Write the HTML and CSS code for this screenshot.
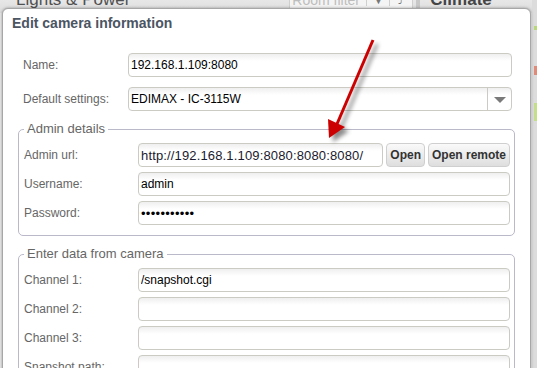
FILE: index.html
```html
<!DOCTYPE html>
<html lang="en">
<head>
  <meta charset="UTF-8">
  <title>Edit camera information</title>
  <link rel="stylesheet" href="styles.css">
</head>
<body>

  <!-- Page behind the dialog -->
  <div class="page">
    <div class="toolbar">
      <h2 class="area-title">Lights &amp; Power</h2>
      <div class="room-filter">
        <span class="filter-text">Room filter</span>
        <span class="filter-btn">&#9660;</span>
        <span class="filter-btn">&#10548;</span>
      </div>
      <span class="sep"></span>
      <h2 class="area-title">Climate</h2>
    </div>
    <div class="side">
      <span class="mark mark-green"></span>
      <span class="mark mark-red"></span>
      <span class="mark mark-lime"></span>
    </div>
  </div>

  <!-- Dialog -->
  <div class="dialog">
    <div class="dialog-title">Edit camera information</div>

    <form class="camera-form">
      <div class="row">
        <label>Name:</label>
        <input type="text" class="field" value="192.168.1.109:8080">
      </div>
      <div class="row">
        <label>Default settings:</label>
        <div class="combo">
          <span class="combo-text">EDIMAX - IC-3115W</span>
          <span class="combo-arrow"></span>
        </div>
      </div>

      <fieldset>
        <legend>Admin details</legend>
        <div class="row">
          <label>Admin url:</label>
          <input type="text" class="field url-field" value="http://192.168.1.109:8080:8080:8080/">
          <button type="button" class="btn">Open</button>
          <button type="button" class="btn">Open remote</button>
        </div>
        <div class="row">
          <label>Username:</label>
          <input type="text" class="field" value="admin">
        </div>
        <div class="row">
          <label>Password:</label>
          <input type="password" class="field pass-field" value="adminadmin1">
        </div>
      </fieldset>

      <fieldset>
        <legend>Enter data from camera</legend>
        <div class="row">
          <label>Channel 1:</label>
          <input type="text" class="field" value="/snapshot.cgi">
        </div>
        <div class="row">
          <label>Channel 2:</label>
          <input type="text" class="field">
        </div>
        <div class="row">
          <label>Channel 3:</label>
          <input type="text" class="field">
        </div>
        <div class="row">
          <label>Snapshot path:</label>
          <input type="text" class="field">
        </div>
      </fieldset>
    </form>
  </div>

  <!-- Red annotation arrow -->
  <svg class="arrow" width="537" height="368" viewBox="0 0 537 368">
    <line x1="373" y1="40" x2="337" y2="124" stroke="#cc0000" stroke-width="3"/>
    <polygon points="329,138 328,119 345,127" fill="#cc0000"/>
  </svg>

</body>
</html>
```

FILE: styles.css
```css
/* Base */
body {
  margin: 0;
  width: 537px;
  height: 368px;
  overflow: hidden;
  background: #e9e9e9;
  font-family: "Liberation Sans", Arial, sans-serif;
  position: relative;
}

/* Page behind the dialog */
.page {
  display: flex;
  height: 368px;
}

.toolbar {
  display: flex;
  align-items: center;
  width: 532px;
  height: 26px;
  margin-top: -13px;
  background: linear-gradient(#f2f2f2, #dcdcdc);
}

.area-title {
  flex-shrink: 0;
  margin: 0 0 0 16px;
  white-space: nowrap;
  font-size: 17px;
  font-weight: normal;
  color: #505050;
}

.room-filter {
  display: flex;
  align-items: center;
  flex-shrink: 0;
  margin-left: 159px;
  height: 24px;
  border: 1px solid #cfcfcf;
  background: #f4f4f4;
}

.filter-text {
  width: 74px;
  padding-left: 2px;
  white-space: nowrap;
  font-size: 14px;
  color: #bdbdbd;
}

.filter-btn {
  width: 22px;
  text-align: center;
  border-left: 1px solid #cfcfcf;
  font-size: 11px;
  color: #777;
}

.sep {
  flex-shrink: 0;
  width: 4px;
  height: 24px;
  margin-left: 3px;
  background: #c8c8c8;
}

.toolbar .area-title:last-child {
  margin-left: 10px;
  font-weight: bold;
  color: #444;
}

.side {
  display: flex;
  flex-direction: column;
  width: 5px;
  background: #dcdcdc;
}

.mark {
  display: block;
  width: 3px;
  margin-left: 2px;
}

.mark-green {
  height: 4px;
  margin-top: 26px;
  background: #b9d77a;
}

.mark-red {
  height: 9px;
  margin-top: 36px;
  background: #e08a7a;
}

.mark-lime {
  height: 18px;
  margin-top: 28px;
  background: #c5de8c;
}

/* Dialog */
.dialog {
  position: absolute;
  left: 2px;
  top: 8px;
  width: 529px;
  height: 380px;
  box-sizing: border-box;
  background: #fff;
  border: 1px solid #a7a7a7;
  border-radius: 6px;
  box-shadow: 0 0 3px rgba(0, 0, 0, 0.35);
}

.dialog-title {
  padding: 4px 9px 0;
  line-height: 20px;
  font-size: 14px;
  font-weight: bold;
  color: #4b5563;
}

.camera-form {
  padding: 20px 18px 0 20px;
}

.row {
  display: flex;
  align-items: center;
  margin-bottom: 10px;
}

.row label {
  width: 105px;
  flex-shrink: 0;
  font-size: 12px;
  color: #666;
}

/* Inputs */
.field {
  flex: 1;
  min-width: 0;
  height: 24px;
  box-sizing: border-box;
  margin: 0;
  padding: 0 2px;
  border: 1px solid #cbcbc4;
  border-radius: 4px;
  background: linear-gradient(#efefef, #ffffff 7px);
  font-family: "Liberation Sans", Arial, sans-serif;
  font-size: 12px;
  color: #000;
  outline: none;
}

.url-field {
  font-size: 13px;
  letter-spacing: 0.15px;
  color: #1a1a2e;
}

.pass-field {
  font-size: 13px;
  letter-spacing: 0.3px;
}

.combo {
  flex: 1;
  display: flex;
  height: 24px;
  box-sizing: border-box;
  border: 1px solid #cbcbc4;
  border-radius: 4px;
  background: linear-gradient(#efefef, #ffffff 7px);
}

.combo-text {
  flex: 1;
  padding-left: 2px;
  line-height: 22px;
  font-size: 12px;
  color: #000;
}

.combo-arrow {
  width: 23px;
  border-left: 1px solid #cbcbc4;
  position: relative;
}

.combo-arrow::after {
  content: "";
  position: absolute;
  left: 6px;
  top: 9px;
  border-left: 6px solid transparent;
  border-right: 6px solid transparent;
  border-top: 6px solid #7a7a7a;
}

/* Buttons */
.btn {
  height: 24px;
  margin-left: 3px;
  padding: 0 3px;
  border: 1px solid #cfcfcf;
  border-radius: 4px;
  background: linear-gradient(#fafafa, #dedede);
  font-family: "Liberation Sans", Arial, sans-serif;
  font-size: 12px;
  font-weight: bold;
  color: #333;
  cursor: pointer;
}

/* Fieldsets */
fieldset {
  margin: 0 -3px 10px -5px;
  padding: 6px 4px 0 5px;
  border: 1px solid #b9b9c9;
  border-radius: 5px;
}

legend {
  padding: 0 3px;
  line-height: 16px;
  font-size: 13px;
  color: #666;
}

fieldset .row {
  margin-bottom: 5px;
}

fieldset .row label {
  width: 114px;
}

fieldset .row:last-child {
  margin-bottom: 10px;
}

/* Arrow annotation */
.arrow {
  position: absolute;
  left: 0;
  top: 0;
  filter: drop-shadow(4px 4px 2px rgba(0, 0, 0, 0.45));
  pointer-events: none;
}
```
